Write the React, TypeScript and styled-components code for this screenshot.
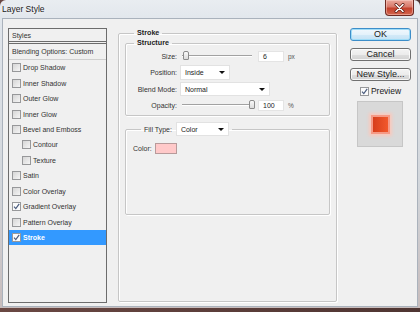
import styled, { createGlobalStyle } from 'styled-components';

const ui = '"Liberation Sans", Arial, sans-serif';

const Global = createGlobalStyle`
  html, body { margin: 0; padding: 0; background: #5b3d3a; }
  * { box-sizing: border-box; }
`;

const Desk = styled.div`
  width: 420px;
  height: 312px;
  overflow: hidden;
  background: linear-gradient(90deg, #6a4843, #4f3532);
`;
const Window = styled.div`
  height: 308px;
  display: flex;
  flex-direction: column;
  padding: 0 2px 1px 2px;
  border-radius: 6px 6px 0 0;
  background: linear-gradient(180deg, #e9edf1 0%, #e0e5eb 8%, #d2d6db 60%, #c7bcbc 100%);
`;
const TitleBar = styled.div`
  height: 18px;
  flex: none;
  display: flex;
  align-items: flex-start;
  justify-content: space-between;
`;
const Title = styled.span`
  font-family: ${ui};
  font-size: 8.5px;
  color: #1b1b1b;
  padding-top: 4px;
  text-shadow: 0 0 4px rgba(255, 255, 255, 0.9);
`;
const CloseBtn = styled.div`
  width: 29px;
  height: 16px;
  margin-right: 4px;
  display: flex;
  align-items: center;
  justify-content: center;
  border: 1px solid #6e2a22;
  border-top: none;
  border-radius: 0 0 4px 4px;
  background: linear-gradient(180deg, #eaa89c 0%, #d8796a 45%, #c4412c 55%, #d2654e 100%);
  box-shadow: inset 0 0 0 1px rgba(255, 220, 210, 0.45);
`;
const Body = styled.div`
  flex: 1;
  display: flex;
  align-items: flex-start;
  padding: 9px 0 0 5px;
  background: #f0f0f0;
  border: 1px solid #aab2bc;
`;

/* ---- styles list ---- */
const StyleList = styled.div`
  width: 99px;
  height: 275px;
  flex: none;
  border: 1px solid #6c6c6c;
  display: flex;
  flex-direction: column;
  font-family: ${ui};
  font-size: 7px;
  color: #333;
`;
const ListHead = styled.div`
  height: 15px;
  flex: none;
  display: flex;
  align-items: center;
  padding-left: 3px;
  border-bottom: 3px double #6c6c6c;
`;
const ListBlend = styled.div`
  height: 16px;
  flex: none;
  display: flex;
  align-items: center;
  padding-left: 3px;
  border-bottom: 1px solid #cfcfcf;
`;
const Item = styled.div<{ $indent?: boolean; $selected?: boolean }>`
  height: 15.45px;
  flex: none;
  display: flex;
  align-items: center;
  gap: 2px;
  padding-left: ${(p) => (p.$indent ? 13 : 3)}px;
  background: ${(p) => (p.$selected ? '#3399ff' : 'transparent')};
  color: ${(p) => (p.$selected ? '#fff' : '#333')};
  font-weight: ${(p) => (p.$selected ? 700 : 400)};
`;
const Box = styled.span<{ $size: number; $white: boolean }>`
  flex: none;
  display: inline-flex;
  align-items: center;
  justify-content: center;
  width: ${(p) => p.$size}px;
  height: ${(p) => p.$size}px;
  border: 1px solid #97989a;
  background: ${(p) => (p.$white ? '#fbfbfb' : 'linear-gradient(135deg, #d6d6d6, #f5f5f5)')};
`;

function Check({ checked, size = 9 }: { checked?: boolean; size?: number }) {
  return (
    <Box $size={size} $white={!!checked}>
      {checked && (
        <svg width={size - 2} height={size - 2} viewBox="0 0 7 7">
          <path d="M1 3.6 L2.8 5.6 L6.2 0.8" fill="none" stroke="#4a5c7e" strokeWidth="1.2" />
        </svg>
      )}
    </Box>
  );
}

/* ---- group boxes ---- */
const Group = styled.fieldset`
  margin: 0;
  min-width: 0;
  border: 1px solid #c6c6c6;
  border-radius: 2px;
  box-shadow: inset 1px 1px 0 #fff, 1px 1px 0 #fff;
`;
const StrokeGroup = styled(Group)`
  width: 219px;
  height: 274px;
  flex: none;
  margin-left: 11px;
  padding: 0 6px;
`;
const StructureGroup = styled(Group)`
  padding: 0 0 2px 0;
`;
const FillGroup = styled(Group)`
  margin-top: 6px;
  height: 93px;
  padding: 0 7px;
`;
const Legend = styled.legend<{ $gap: number }>`
  margin-left: ${(p) => p.$gap}px;
  padding: 0 3px;
  font-family: ${ui};
  font-size: 7.2px;
  font-weight: 700;
  line-height: 10px;
  color: #222;
`;
const FillLegend = styled.legend`
  margin-left: 8px;
  padding: 0 3px;
  display: flex;
  align-items: center;
  gap: 4px;
  font-family: ${ui};
  font-size: 7px;
  color: #333;
`;
const Rows = styled.div`
  display: grid;
  grid-template-columns: 51px 1fr;
  grid-template-rows: 16px 17px 16px 16px;
  column-gap: 3px;
  align-items: center;
  font-family: ${ui};
  font-size: 7px;
  color: #333;
`;
const Label = styled.span`
  text-align: right;
`;
const Control = styled.div`
  display: flex;
  align-items: center;
  gap: 4px;
`;
const Slider = styled.div`
  position: relative;
  width: 74px;
  height: 10px;
  display: flex;
  align-items: center;
  padding: 0 2px;
`;
const Track = styled.div`
  flex: 1;
  height: 2px;
  border-top: 1px solid #a2a2a2;
  border-bottom: 1px solid #ffffff;
`;
const Thumb = styled.span`
  position: absolute;
  top: 0;
  width: 6px;
  height: 9px;
  border: 1px solid #8c8c8c;
  border-radius: 2px 2px 1px 1px;
  background: linear-gradient(180deg, #fafafa, #dcdcdc);
`;
const Field = styled.div`
  width: 26px;
  height: 11px;
  display: flex;
  align-items: center;
  padding-left: 4px;
  background: #fff;
  border: 1px solid #e4e4e4;
  color: #222;
`;
const Unit = styled.span`
  font-size: 6.5px;
  color: #555;
`;
const Select = styled.div<{ $w: number; $h: number }>`
  width: ${(p) => p.$w}px;
  height: ${(p) => p.$h}px;
  display: flex;
  align-items: center;
  justify-content: space-between;
  padding: 0 4px 0 4px;
  background: #fff;
  border: 1px solid #e2e2e2;
  color: #222;
  font-family: ${ui};
  font-size: 7px;
`;
const Arrow = styled.span`
  width: 0;
  height: 0;
  border-left: 3px solid transparent;
  border-right: 3px solid transparent;
  border-top: 3px solid #111;
`;
const ColorRow = styled.div`
  display: flex;
  align-items: center;
  gap: 3px;
  height: 12px;
  margin-top: 6px;
  font-family: ${ui};
  font-size: 7px;
  color: #333;
`;
const Swatch = styled.span`
  width: 22px;
  height: 11px;
  background: #ffc9c9;
  border: 1px solid #b89a9a;
`;

/* ---- right column ---- */
const Side = styled.div`
  width: 61px;
  flex: none;
  margin-left: 13px;
  display: flex;
  flex-direction: column;
  gap: 4px;
`;
const Buttons = styled.div`
  display: flex;
  flex-direction: column;
  gap: 7px;
`;
const Button = styled.button<{ $default?: boolean }>`
  height: 13px;
  padding: 0;
  border-radius: 3px;
  font-family: ${ui};
  font-size: 9px;
  line-height: 11px;
  color: #1a1a1a;
  border: 1px solid ${(p) => (p.$default ? '#3d8ec9' : '#707070')};
  background: ${(p) =>
    p.$default
      ? 'linear-gradient(180deg, #f1f8fd 0%, #e4f2fb 50%, #d3eaf8 51%, #c5e2f5 100%)'
      : 'linear-gradient(180deg, #f4f4f4 0%, #ececec 50%, #dedede 51%, #d2d2d2 100%)'};
  box-shadow: inset 0 0 0 1px ${(p) => (p.$default ? '#9fdcf7' : 'rgba(255,255,255,0.8)')};
`;
const PreviewRow = styled.div`
  height: 12px;
  display: flex;
  align-items: center;
  justify-content: center;
  gap: 2px;
  font-family: ${ui};
  font-size: 8.5px;
  color: #222;
`;
const PreviewBox = styled.div`
  width: 46px;
  height: 46px;
  margin-left: 7px;
  display: flex;
  align-items: center;
  justify-content: center;
  background: #d9d9d9;
  border: 1px solid #c6c6c6;
`;
const PreviewSquare = styled.span`
  width: 15px;
  height: 15px;
  background: linear-gradient(90deg, #d63e1c, #f2582b);
  box-shadow: 0 0 0 2px #f59a86, 0 0 3px 4px #f9c8bc;
`;

const effects: { name: string; indent?: boolean; checked?: boolean; selected?: boolean }[] = [
  { name: 'Drop Shadow' },
  { name: 'Inner Shadow' },
  { name: 'Outer Glow' },
  { name: 'Inner Glow' },
  { name: 'Bevel and Emboss' },
  { name: 'Contour', indent: true },
  { name: 'Texture', indent: true },
  { name: 'Satin' },
  { name: 'Color Overlay' },
  { name: 'Gradient Overlay', checked: true },
  { name: 'Pattern Overlay' },
  { name: 'Stroke', checked: true, selected: true },
];

function Range({ pct }: { pct: number }) {
  return (
    <Slider>
      <Track />
      <Thumb style={{ left: `${2 + pct * 70 - 3}px` }} />
    </Slider>
  );
}

export default function App() {
  return (
    <Desk>
      <Global />
      <Window>
        <TitleBar>
          <Title>Layer Style</Title>
          <CloseBtn>
            <svg width="11" height="10" viewBox="0 0 11 10">
              <path d="M2 1.5 L9 8.5 M9 1.5 L2 8.5" stroke="#5a1a12" strokeWidth="3" strokeLinecap="round" />
              <path d="M2 1.5 L9 8.5 M9 1.5 L2 8.5" stroke="#ffffff" strokeWidth="1.6" strokeLinecap="round" />
            </svg>
          </CloseBtn>
        </TitleBar>
        <Body>
          <StyleList>
            <ListHead>Styles</ListHead>
            <ListBlend>Blending Options: Custom</ListBlend>
            {effects.map((e) => (
              <Item key={e.name} $indent={e.indent} $selected={e.selected}>
                <Check checked={e.checked} />
                {e.name}
              </Item>
            ))}
          </StyleList>

          <StrokeGroup>
            <Legend $gap={9}>Stroke</Legend>
            <StructureGroup>
              <Legend $gap={8}>Structure</Legend>
              <Rows>
                <Label>Size:</Label>
                <Control>
                  <Range pct={0.06} />
                  <Field>6</Field>
                  <Unit>px</Unit>
                </Control>
                <Label>Position:</Label>
                <Control>
                  <Select $w={50} $h={15}>
                    Inside
                    <Arrow />
                  </Select>
                </Control>
                <Label>Blend Mode:</Label>
                <Control>
                  <Select $w={90} $h={14}>
                    Normal
                    <Arrow />
                  </Select>
                </Control>
                <Label>Opacity:</Label>
                <Control>
                  <Range pct={1} />
                  <Field>100</Field>
                  <Unit>%</Unit>
                </Control>
              </Rows>
            </StructureGroup>
            <FillGroup>
              <FillLegend>
                Fill Type:
                <Select $w={53} $h={14}>
                  Color
                  <Arrow />
                </Select>
              </FillLegend>
              <ColorRow>
                Color:
                <Swatch />
              </ColorRow>
            </FillGroup>
          </StrokeGroup>

          <Side>
            <Buttons>
              <Button $default>OK</Button>
              <Button>Cancel</Button>
              <Button>New Style...</Button>
            </Buttons>
            <PreviewRow>
              <Check checked size={9} />
              Preview
            </PreviewRow>
            <PreviewBox>
              <PreviewSquare />
            </PreviewBox>
          </Side>
        </Body>
      </Window>
    </Desk>
  );
}
